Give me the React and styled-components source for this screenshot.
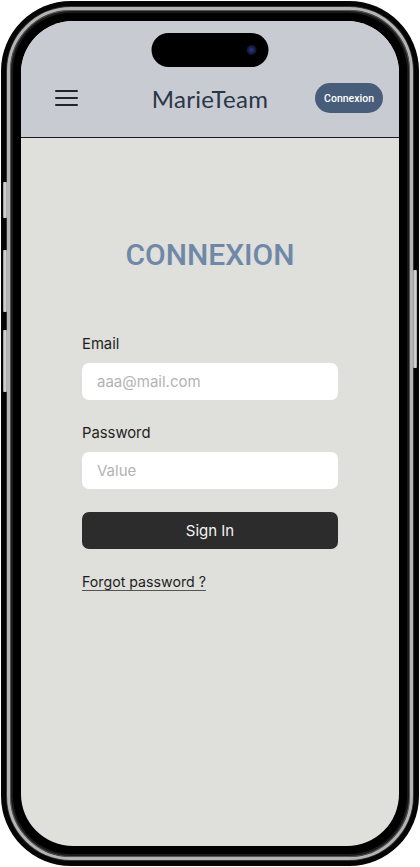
import React from "react";
import styled, { createGlobalStyle } from "styled-components";

const Global = createGlobalStyle`
  html, body { margin: 0; padding: 0; background: #ffffff; }
  * { box-sizing: border-box; }
`;

const Stage = styled.div`
  width: 420px;
  height: 867px;
  padding: 1px;
  position: relative;
`;

const Body = styled.div`
  width: 418px;
  height: 865px;
  border-radius: 70px;
  background: #050505;
  padding: 6px;
`;

const Rim = styled.div`
  height: 100%;
  border-radius: 64px;
  border: 3px solid #b4b4b4;
  box-shadow: inset 0 0 0 1px #555, inset 0 0 0 3px #1a1a1a, 0 0 0 1px #333;
  background: #000;
  padding: 11px;
`;

const Screen = styled.div`
  position: relative;
  height: 100%;
  border-radius: 52px;
  overflow: hidden;
  background: #dfdfdb;
  display: flex;
  flex-direction: column;
`;

const SideButton = styled.div`
  position: absolute;
  left: ${(p) => p.$left}px;
  top: ${(p) => p.$top}px;
  width: 4px;
  height: ${(p) => p.$h}px;
  border-radius: 1px;
  background: linear-gradient(90deg, #8a8a8a, #e2e2e2 50%, #9a9a9a);
`;

const Island = styled.div`
  position: absolute;
  top: 12px;
  left: 50%;
  transform: translateX(-50%);
  width: 117px;
  height: 34px;
  border-radius: 17px;
  background: #000;
`;

const Lens = styled.div`
  position: absolute;
  right: 12px;
  top: 12px;
  width: 10px;
  height: 10px;
  border-radius: 50%;
  background: radial-gradient(circle, #2a3a8a 0%, #151a3a 55%, #05060c 100%);
`;

const Header = styled.header`
  height: 117px;
  background: #c8ccd2;
  border-bottom: 1px solid #1a1a1a;
  padding: 62px 16px 24px 34px;
  display: grid;
  grid-template-columns: 1fr auto 1fr;
  align-items: center;
`;

const Burger = styled.div`
  width: 23px;
  display: flex;
  flex-direction: column;
  gap: 4.5px;
  span {
    display: block;
    height: 2.5px;
    background: #1f2430;
    border-radius: 1px;
  }
`;

const Brand = styled.div`
  font-family: Lato, "Noto Sans", sans-serif;
  font-size: 24px;
  font-weight: 400;
  color: #2b3548;
  letter-spacing: 0.3px;
  transform: translateX(-9px);
`;

const PillButton = styled.button`
  justify-self: end;
  height: 30px;
  padding: 0 9px;
  border: none;
  border-radius: 15px;
  background: #475d7a;
  color: #ffffff;
  font-family: Roboto, "Noto Sans", sans-serif;
  font-size: 10.5px;
  font-weight: 500;
`;

const Main = styled.main`
  flex: 1;
  padding: 99px 61px 0;
  display: flex;
  flex-direction: column;
`;

const Title = styled.h1`
  margin: 0 0 61px;
  text-align: center;
  font-family: Roboto, "Noto Sans", sans-serif;
  font-weight: 500;
  font-size: 30px;
  line-height: 36px;
  color: #6f88a7;
`;

const Label = styled.label`
  font-family: Inter, "Noto Sans", sans-serif;
  font-size: 14.8px;
  line-height: 20px;
  color: #1e1e1e;
  margin-bottom: 9px;
`;

const Input = styled.input`
  height: 37px;
  width: 100%;
  border: none;
  border-radius: 7px;
  background: #ffffff;
  padding: 0 15px;
  font-family: Inter, "Noto Sans", sans-serif;
  font-size: 15px;
  color: #1e1e1e;
  margin-bottom: ${(p) => p.$mb}px;
  outline: none;
  &::placeholder { color: #b3b3b3; }
`;

const Primary = styled.button`
  height: 37px;
  width: 100%;
  border: none;
  border-radius: 7px;
  background: #2c2c2c;
  color: #f5f5f5;
  font-family: Inter, "Noto Sans", sans-serif;
  font-size: 15px;
  margin-bottom: 23px;
`;

const Link = styled.a`
  align-self: flex-start;
  font-family: Inter, "Noto Sans", sans-serif;
  font-size: 14.2px;
  line-height: 20px;
  color: #1e1e1e;
  text-decoration: underline;
  text-underline-offset: 3px;
  text-decoration-color: #555;
`;

export default function App() {
  return (
    <>
      <Global />
      <Stage>
        <Body>
          <Rim>
            <Screen>
              <Island>
                <Lens />
              </Island>
              <Header>
                <Burger>
                  <span />
                  <span />
                  <span />
                </Burger>
                <Brand>MarieTeam</Brand>
                <PillButton>Connexion</PillButton>
              </Header>
              <Main>
                <Title>CONNEXION</Title>
                <Label>Email</Label>
                <Input placeholder="aaa@mail.com" $mb={23} />
                <Label>Password</Label>
                <Input type="password" placeholder="Value" $mb={23} />
                <Primary>Sign In</Primary>
                <Link href="#">Forgot password ?</Link>
              </Main>
            </Screen>
          </Rim>
        </Body>
        <SideButton $left={3} $top={182} $h={36} />
        <SideButton $left={3} $top={250} $h={62} />
        <SideButton $left={3} $top={330} $h={62} />
        <SideButton $left={413} $top={270} $h={98} />
      </Stage>
    </>
  );
}
